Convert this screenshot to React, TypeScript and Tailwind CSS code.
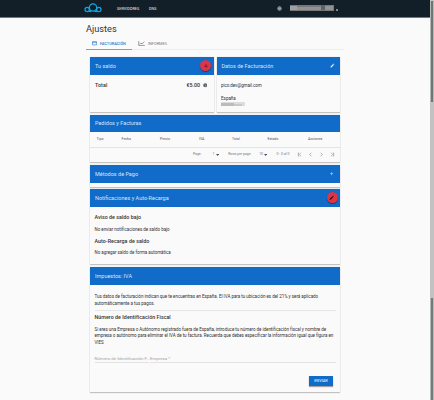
import type { ReactNode } from "react";

const card = "bg-[#fafafa] shadow-[0_1px_1px_rgba(0,0,0,0.2),0_0_1px_rgba(0,0,0,0.18)]";

function CardHeader({ title, children }: { title: string; children?: ReactNode }) {
  return (
    <div className="flex h-[17.5px] items-center justify-between bg-[#116bc9] pr-[2.5px] pl-[5px] text-[5.5px] text-[#d3e6fa]">
      <span className="pt-[1px]">{title}</span>
      {children}
    </div>
  );
}

function Pencil({ className }: { className: string }) {
  return (
    <svg viewBox="0 0 24 24" className={className} fill="currentColor">
      <path d="M3 17.25V21h3.75L17.81 9.94l-3.75-3.75L3 17.25zM20.71 7.04a1 1 0 0 0 0-1.41l-2.34-2.34a1 1 0 0 0-1.41 0l-1.83 1.83 3.75 3.75 1.83-1.83z" />
    </svg>
  );
}

function Plus({ className }: { className: string }) {
  return (
    <svg viewBox="0 0 24 24" className={className} fill="currentColor">
      <path d="M19 13.5h-5.5v5.5h-3v-5.5H5v-3h5.5V5h3v5.5H19z" />
    </svg>
  );
}

function Pager({ d }: { d: string }) {
  return (
    <svg viewBox="0 0 24 24" className="h-[7px] w-[7px]" fill="none" stroke="currentColor" strokeWidth="2.2">
      <path d={d} />
    </svg>
  );
}

function Caret() {
  return (
    <svg viewBox="0 0 10 6" className="h-[2px] w-[3.2px]" fill="#555">
      <path d="M0 0h10L5 6z" />
    </svg>
  );
}

export default function App() {
  return (
    <div className="relative flex h-[400px] w-[434px] flex-col overflow-hidden bg-[#fafafa] font-['Roboto','Liberation_Sans',sans-serif] leading-none whitespace-nowrap text-[#333]">
      <header className="flex h-[17.5px] shrink-0 items-center border-b border-[#6f7b80] bg-[#121e28] pl-[84px] text-[3.8px] font-medium text-[#d4d9dc]">
        <svg viewBox="0 0 54 30" className="mb-[1px] h-[10px] w-[18px]" fill="none" stroke="#10a4e6" strokeWidth="3.8">
          <circle cx="9.5" cy="19.5" r="6.5" />
          <circle cx="27" cy="13.5" r="11" />
          <circle cx="44.5" cy="19.5" r="6.5" />
          <path d="M14 24q4 3 8 0M40 24q-4 3-8 0" />
        </svg>
        <span className="ml-[15px] w-[32px] pt-[1px]">SERVIDORES</span>
        <span className="w-[128px] pt-[1px]">DNS</span>
        <svg viewBox="0 0 24 24" className="h-[5px] w-[5px]" fill="none" stroke="#b9c0c4" strokeWidth="2.6">
          <circle cx="12" cy="12" r="9" />
          <path d="M3 12h18M12 3v18M8 4v16M16 4v16" />
        </svg>
        <div className="ml-[8px] flex h-[6px] w-[44px] bg-[#77777a] blur-[0.4px]">
          <i className="mt-px h-[4px] w-[7px] bg-[#a0a0a2]" />
          <i className="mt-[2px] h-[3px] w-[24px] bg-[#929294]" />
          <i className="h-[5px] w-[4px] bg-[#5c6268]" />
          <i className="mt-px h-[4px] w-[8px] bg-[#929294]" />
        </div>
        <i className="mt-[3px] ml-[2px] h-[1.5px] w-[2px] bg-[#7c868c]" />
      </header>

      <h1 className="mt-[6.5px] ml-[86px] h-[10px] text-[9.2px] leading-[10px] text-[#333]">Ajustes</h1>

      <nav className="ml-[86px] flex h-[16px] w-[258px] shrink-0 border-b border-[#eeeeee] text-[3.9px]">
        <div className="flex h-[16px] w-[46px] items-center border-b border-[#e27a80] pt-[4px] pl-[6px] text-[#2678cf]">
          <svg viewBox="0 0 24 20" className="mr-[3px] h-[4.5px] w-[5px]" fill="none" stroke="currentColor" strokeWidth="3">
            <path d="M2 2h20v16H2zM2 7h20" />
          </svg>
          <span className="font-medium">FACTURACIÓN</span>
        </div>
        <div className="flex h-[16px] items-center pt-[3px] pl-[6px] text-[#777]">
          <svg viewBox="0 0 24 18" className="mr-[3px] h-[5px] w-[7px]" fill="none" stroke="#555" strokeWidth="2">
            <path d="M2 0v16h22M5 12l5-5 4 4 8-9" />
          </svg>
          <span>INFORMES</span>
        </div>
      </nav>

      <main className="ml-[90px] flex w-[250px] shrink-0 flex-col pt-[7px]">
        <div className="flex h-[55px] gap-[3px]">
          <section className={`w-[123.5px] ${card}`}>
            <CardHeader title="Tu saldo">
              <span className="flex h-[11px] w-[11px] items-center justify-center rounded-full bg-[#dc3545] text-[#701820] shadow-[0_1px_1px_rgba(0,0,0,0.35)]">
                <Plus className="h-[6px] w-[6px]" />
              </span>
            </CardHeader>
            <div className="flex items-center px-[5px] pt-[8.4px] text-[5.3px] font-medium text-[#333]">
              <span className="flex-1 tracking-[0.1px]">Total</span>
              <span>€5.00</span>
              <svg viewBox="0 0 24 24" className="mr-[1.5px] ml-[2.5px] h-[4.5px] w-[4.5px]" fill="#666">
                <circle cx="12" cy="12" r="11" />
                <path d="M11 10h2v8h-2zM11 6h2v2h-2z" fill="#ddd" />
              </svg>
            </div>
          </section>
          <section className={`w-[123.5px] ${card}`}>
            <CardHeader title="Datos de Facturación">
              <Pencil className="mr-[3px] h-[5px] w-[5px] text-white" />
            </CardHeader>
            <div className="flex flex-col pt-[8px] pl-[4.5px] text-[4.5px]">
              <span className="h-[13px] leading-[5px] tracking-[-0.08px]">pico.dev@gmail.com</span>
              <span className="h-[6px] leading-[5px]">España</span>
              <div className="flex h-[4px] w-[24px] items-end bg-[#dddddd] blur-[0.5px]">
                <i className="h-[3px] w-[13px] bg-[#bcbcbc]" />
                <i className="h-[2px] w-[8px] bg-[#c8c8c8]" />
              </div>
            </div>
          </section>
        </div>

        <section className={`mt-[2.5px] h-[47.5px] ${card}`}>
          <CardHeader title="Pedidos y Facturas" />
          <div className="flex h-[15.5px] items-center border-b border-[#e4e4e4] pl-[6.5px] text-[3.5px] text-[#555]">
            <span className="w-[25px]">Tipo</span>
            <span className="w-[38.5px]">Fecha</span>
            <span className="w-[39px]">Precio</span>
            <span className="w-[33px]">IVA</span>
            <span className="w-[35.5px]">Total</span>
            <span className="w-[40.5px]">Estado</span>
            <span>Acciones</span>
          </div>
          <div className="flex h-[14px] items-center pl-[103px] text-[3.4px] text-[#777]">
            <span className="w-[19.5px]">Page:</span>
            <span className="w-[3.5px]">1</span>
            <Caret />
            <span className="ml-[9px] w-[31px]">Rows per page:</span>
            <span className="w-[5px]">10</span>
            <Caret />
            <span className="ml-[9px] w-[19.5px]">0 - 0 of 0</span>
            <div className="flex gap-[4px] text-[#888]">
              <Pager d="M8 5v14M17 6l-6 6 6 6" />
              <Pager d="M15 6l-6 6 6 6" />
              <Pager d="M9 6l6 6-6 6" />
              <Pager d="M7 6l6 6-6 6M16 5v14" />
            </div>
          </div>
        </section>

        <section className={`mt-[3px] h-[21.5px] ${card}`}>
          <CardHeader title="Métodos de Pago">
            <Plus className="mr-[3px] h-[5.5px] w-[5.5px] text-[#b8d6f5]" />
          </CardHeader>
        </section>

        <section className={`mt-[2.5px] h-[75px] ${card}`}>
          <CardHeader title="Notificaciones y Auto-Recarga">
            <span className="flex h-[11px] w-[11px] items-center justify-center rounded-full bg-[#dc3545] text-[#30080c] shadow-[0_1px_1px_rgba(0,0,0,0.35)]">
              <Pencil className="h-[5.5px] w-[5.5px]" />
            </span>
          </CardHeader>
          <div className="flex flex-col pt-[7.5px] pl-[4.5px]">
            <b className="h-[12.5px] text-[5.3px] leading-[6px] font-medium tracking-[0.03px]">Aviso de saldo bajo</b>
            <span className="h-[11px] text-[4.5px] leading-[5px] tracking-[-0.03px]">No enviar notificaciones de saldo bajo</span>
            <b className="h-[12.5px] text-[5.3px] leading-[6px] font-medium tracking-[0.05px]">Auto-Recarga de saldo</b>
            <span className="text-[4.5px] leading-[5px] tracking-[-0.03px]">No agregar saldo de forma automática</span>
          </div>
        </section>

        <section className={`mt-[3px] h-[125px] ${card}`}>
          <CardHeader title="Impuestos: IVA" />
          <div className="flex flex-col px-[4.5px] pt-[9.5px]">
            <p className="h-[16.5px] border-b border-[#e6e6e6] text-[4.5px] leading-[6.5px] tracking-[-0.03px]">
              Tus datos de facturación indican que te encuentras en España. El IVA para tu ubicación es del 21% y será aplicado
              <br />
              automáticamente a tus pagos.
            </p>
            <b className="mt-[3.5px] h-[12.5px] text-[5.3px] leading-[6px] font-medium tracking-[0.04px]">Número de Identificación Fiscal</b>
            <p className="text-[4.5px] leading-[6.5px] tracking-[-0.035px]">
              Si eres una Empresa o Autónomo registrado fuera de España, introduce tu número de identificación fiscal y nombre de
              <br />
              empresa o autónomo para eliminar el IVA de tu factura. Recuerda que debes especificar la información igual que figura en
              <br />
              VIES
            </p>
            <div className="mt-[10px] flex gap-[1.5px] text-[4.4px] leading-[5px] text-[#a4a4a4]">
              <span className="h-[7px] w-[54px] border-b border-[#e3e3e3]">Número de Identificación F...</span>
              <span className="h-[7px] flex-1 border-b border-[#e3e3e3]">Empresa *</span>
            </div>
            <button className="mt-[13px] mr-[2.5px] h-[10px] w-[24px] self-end bg-[#116bc9] text-[3.9px] font-medium text-[#d8e8fa] shadow-[0_1px_1px_rgba(0,0,0,0.35)]">
              ENVIAR
            </button>
          </div>
        </section>
      </main>

      <aside className="absolute top-0 right-0 flex h-[400px] w-[4px] flex-col bg-[#c2c2c2]">
        <i className="mt-px h-[101px] border-x border-[#b4bab7] bg-[#6f7773]" />
        <i className="mt-auto h-[102px] border-x border-[#b4bab7] bg-[#747c78]" />
      </aside>
    </div>
  );
}
